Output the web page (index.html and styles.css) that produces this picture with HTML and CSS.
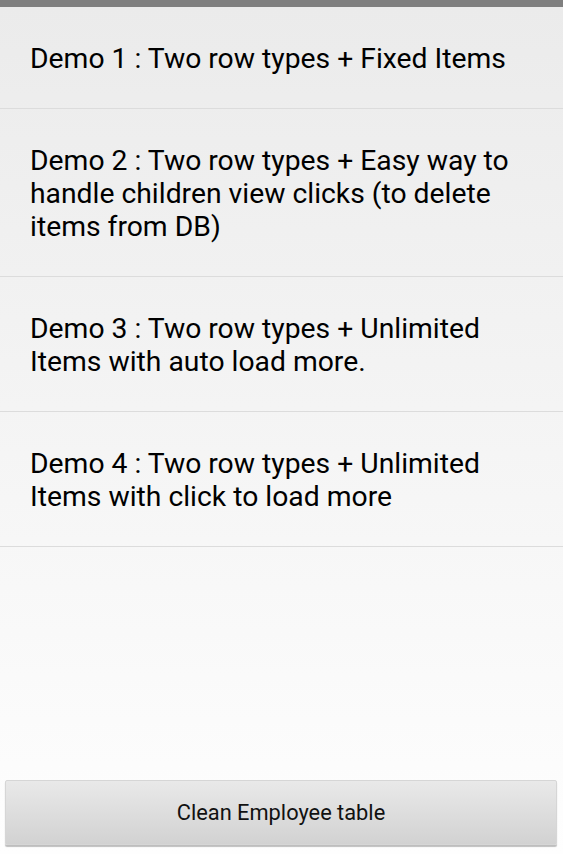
FILE: index.html
```html
<!DOCTYPE html>
<html lang="en">
<head>
    <meta charset="UTF-8">
    <meta name="viewport" content="width=device-width, initial-scale=1.0">
    <title>Demos</title>
    <link rel="stylesheet" href="styles.css">
</head>
<body>

<div class="top-bar"></div>

<div class="screen">
    <ul class="demo-list">
        <li class="demo-item">Demo 1 : Two row types + Fixed Items</li>
        <li class="demo-item">Demo 2 : Two row types + Easy way to handle children view clicks (to delete items from DB)</li>
        <li class="demo-item">Demo 3 : Two row types + Unlimited Items with auto load more.</li>
        <li class="demo-item">Demo 4 : Two row types + Unlimited Items with click to load more</li>
    </ul>

    <div class="footer">
        <button class="clean-btn">Clean Employee table</button>
    </div>
</div>

</body>
</html>
```

FILE: styles.css
```css
html, body {
    height: 100%;
}

body {
    margin: 0;
    font-family: Roboto, "Noto Sans", sans-serif;
    color: #000;
    display: flex;
    flex-direction: column;
}

.top-bar {
    height: 7px;
    background-color: #7f7f7f;
}

.screen {
    flex: 1;
    display: flex;
    flex-direction: column;
    background: linear-gradient(to bottom, #ebebeb, #fefefe);
}

.demo-list {
    list-style: none;
    margin: 0;
    padding: 0;
}

.demo-item {
    padding: 35px 25px 33px 30px;
    font-size: 28.3px;
    line-height: 33px;
    border-bottom: 1px solid #dcdcdc;
}

.footer {
    margin-top: auto;
    padding: 0 6px 9px 5px;
}

.clean-btn {
    width: 100%;
    height: 65px;
    font-family: Roboto, "Noto Sans", sans-serif;
    font-size: 21.8px;
    color: #111;
    background: linear-gradient(to bottom, #e9e9e9, #d2d2d2);
    border: 1px solid #d6d6d6;
    border-radius: 2px;
    box-shadow: 0 2px 1px rgba(0, 0, 0, 0.25);
    cursor: pointer;
}
```
